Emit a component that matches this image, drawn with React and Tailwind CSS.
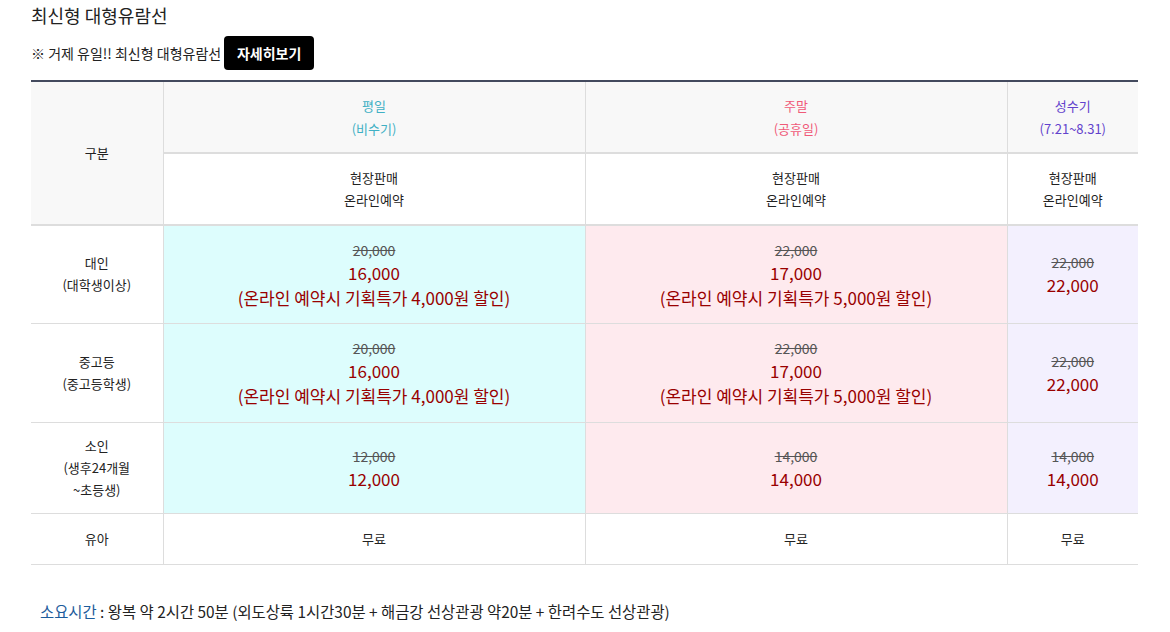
import React from "react";

const font = { fontFamily: '"Noto Sans CJK KR", "Noto Sans", sans-serif' };

function Price({ old, now, note }) {
  return (
    <div className="flex flex-col items-center">
      <span className="text-[14px] leading-[22px] text-[#555] line-through">{old}</span>
      <span className="text-[17px] leading-[24px] text-[#990000]">{now}</span>
      {note && <span className="text-[17px] leading-[25px] text-[#990000]">{note}</span>}
    </div>
  );
}

export default function App() {
  const td = "border border-[#dddddd] text-center align-middle";
  return (
    <div className="bg-white pl-[31px] pr-[32px] text-[#222]" style={font}>
      <h2 className="pt-[3px] text-[18px] leading-[24px] text-[#222] font-normal">최신형 대형유람선</h2>
      <div className="mt-[9px] flex items-center gap-[3px] text-[14px] text-[#222]">
        <span>※ 거제 유일!! 최신형 대형유람선</span>
        <span className="inline-flex h-[34px] w-[90px] items-center justify-center rounded-[4px] bg-black text-[14px] font-bold text-white">자세히보기</span>
      </div>
      <table className="mt-[10px] w-full border-collapse border-t-2 border-t-[#434a5e] text-[13px] text-[#222]">
        <colgroup>
          <col className="w-[132px]" />
          <col className="w-[422px]" />
          <col className="w-[422px]" />
          <col className="w-[131px]" />
        </colgroup>
        <tbody>
          <tr className="h-[72px] bg-[#f8f8f8]">
            <td rowSpan={2} className={`${td} border-l-0 border-b-2 border-t-2 border-t-[#434a5e]`}>구분</td>
            <td className={`${td} border-b-2 border-t-2 border-t-[#434a5e] leading-[23px] text-[#3fb0c4]`}>평일<br />(비수기)</td>
            <td className={`${td} border-b-2 border-t-2 border-t-[#434a5e] leading-[23px] text-[#f05a78]`}>주말<br />(공휴일)</td>
            <td className={`${td} border-r-0 border-b-2 border-t-2 border-t-[#434a5e] leading-[23px] text-[#6242cc]`}>성수기<br />(7.21~8.31)</td>
          </tr>
          <tr className="h-[72px] bg-white">
            <td className={`${td} border-b-2 leading-[22px]`}>현장판매<br />온라인예약</td>
            <td className={`${td} border-b-2 leading-[22px]`}>현장판매<br />온라인예약</td>
            <td className={`${td} border-r-0 border-b-2 leading-[22px]`}>현장판매<br />온라인예약</td>
          </tr>
          <tr className="h-[98px]">
            <td className={`${td} border-l-0 bg-white leading-[22px]`}>대인<br />(대학생이상)</td>
            <td className={`${td} bg-[#ddfdfd]`}><Price old="20,000" now="16,000" note="(온라인 예약시 기획특가 4,000원 할인)" /></td>
            <td className={`${td} bg-[#feeaee]`}><Price old="22,000" now="17,000" note="(온라인 예약시 기획특가 5,000원 할인)" /></td>
            <td className={`${td} border-r-0 bg-[#f3f0fe]`}><Price old="22,000" now="22,000" /></td>
          </tr>
          <tr className="h-[99px]">
            <td className={`${td} border-l-0 bg-white leading-[22px]`}>중고등<br />(중고등학생)</td>
            <td className={`${td} bg-[#ddfdfd]`}><Price old="20,000" now="16,000" note="(온라인 예약시 기획특가 4,000원 할인)" /></td>
            <td className={`${td} bg-[#feeaee]`}><Price old="22,000" now="17,000" note="(온라인 예약시 기획특가 5,000원 할인)" /></td>
            <td className={`${td} border-r-0 bg-[#f3f0fe]`}><Price old="22,000" now="22,000" /></td>
          </tr>
          <tr className="h-[91px]">
            <td className={`${td} border-l-0 bg-white leading-[22px]`}>소인<br />(생후24개월<br />~초등생)</td>
            <td className={`${td} bg-[#ddfdfd]`}><Price old="12,000" now="12,000" /></td>
            <td className={`${td} bg-[#feeaee]`}><Price old="14,000" now="14,000" /></td>
            <td className={`${td} border-r-0 bg-[#f3f0fe]`}><Price old="14,000" now="14,000" /></td>
          </tr>
          <tr className="h-[51px] bg-white">
            <td className={`${td} border-l-0`}>유아</td>
            <td className={td}>무료</td>
            <td className={td}>무료</td>
            <td className={`${td} border-r-0`}>무료</td>
          </tr>
        </tbody>
      </table>
      <p className="mt-[36px] pl-[9px] text-[15.4px] leading-[20px] text-[#222]">
        <span className="text-[#1d5c9b]">소요시간</span> : 왕복 약 2시간 50분 (외도상륙 1시간30분 + 해금강 선상관광 약20분 + 한려수도 선상관광)
      </p>
    </div>
  );
}
